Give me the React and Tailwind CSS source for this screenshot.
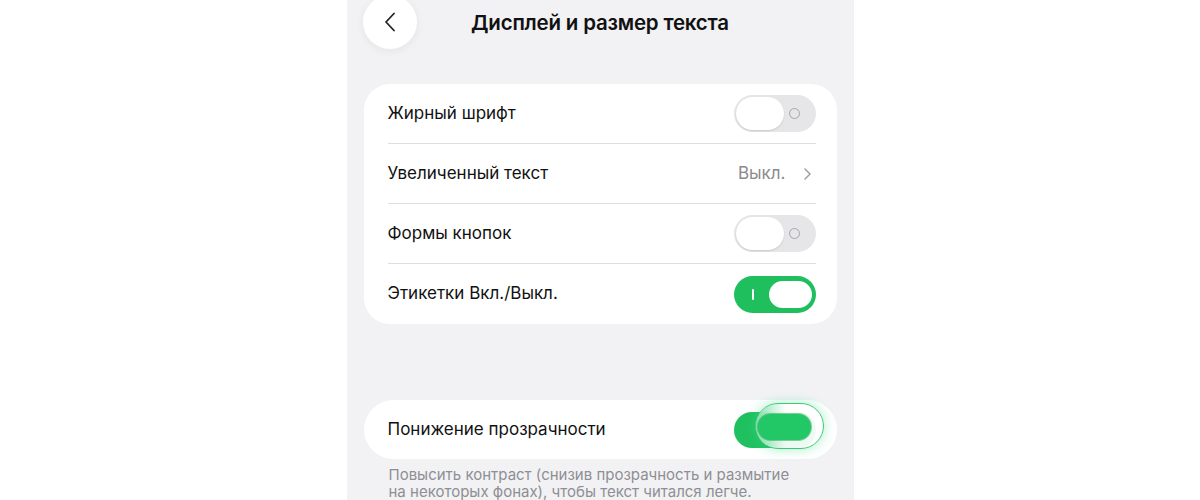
import React from "react";

const font = { fontFamily: "Inter, 'Noto Sans', sans-serif" };

function OffToggle() {
  return (
    <div className="relative w-[82px] h-[37px] rounded-full bg-[#e6e6e9] flex items-center">
      <div className="ml-[2px] w-[48px] h-[33px] rounded-full bg-white shadow-[0_1px_2px_rgba(0,0,0,0.12)]" />
      <div className="ml-[5px] w-[11px] h-[11px] rounded-full border-[1.5px] border-[#a5a5aa]" />
    </div>
  );
}

function OnToggle() {
  return (
    <div className="w-[82px] h-[37px] rounded-full bg-[#1fbf5e] flex items-center">
      <div className="ml-[18px] w-[2px] h-[11px] bg-white rounded-full" />
      <div className="ml-[13px] w-[47px] h-[31px] rounded-full bg-white border-[2px] border-[#1fbf5e]" />
    </div>
  );
}

function GlassToggle() {
  return (
    <div className="relative w-[82px] h-[36px]">
      <div className="absolute left-0 top-0 w-[82px] h-[36px] rounded-full bg-[#1fc060]" />
      <div className="absolute left-[21px] top-[-9px] w-[69px] h-[46px] rounded-full bg-[rgba(255,255,255,0.92)] border border-[#3cc878] shadow-[0_0_12px_rgba(60,220,130,0.45)] overflow-hidden">
        <div className="absolute left-0 top-0 w-[30px] h-full bg-gradient-to-r from-[rgba(40,200,110,0.55)] to-transparent" />
        <div className="absolute left-[2px] top-[10px] w-[53px] h-[26px] rounded-full bg-[#22c766] shadow-[0_0_0_1px_rgba(20,160,80,0.5)]" />
      </div>
    </div>
  );
}

function Row({ label, right, last }) {
  return (
    <div className="h-[60px] flex items-center pr-[21px]">
      <div className={"flex-1 h-full flex items-center justify-between " + (last ? "" : "border-b border-[#dedee2]")}>
        <span className="text-[17px] text-[#111]">{label}</span>
        {right}
      </div>
    </div>
  );
}

export default function App() {
  return (
    <div className="w-[1200px] h-[500px] bg-white flex justify-center overflow-hidden" style={font}>
      <div className="w-[507px] h-full bg-[#f2f2f5] flex flex-col px-[17px]">
        <div className="h-[86px] flex relative">
          <div className="absolute left-[-1px] top-[-5px] w-[54px] h-[54px] rounded-full bg-white shadow-[0_2px_10px_rgba(0,0,0,0.06)] flex items-center justify-center">
            <svg width="12" height="20" viewBox="0 0 12 20" fill="none">
              <path d="M10 1.5 L2 10 L10 18.5" stroke="#222" strokeWidth="1.8" strokeLinecap="round" strokeLinejoin="round" />
            </svg>
          </div>
          <div className="w-full text-center pt-[8px] text-[20.5px] font-semibold text-[#111] tracking-[-0.2px]">
            Дисплей и размер текста
          </div>
        </div>
        <div className="bg-white rounded-[26px] pl-[24px]">
          <Row label="Жирный шрифт" right={<OffToggle />} />
          <Row
            label="Увеличенный текст"
            right={
              <div className="flex items-center gap-[18px] pr-[5px]">
                <span className="text-[17px] text-[#8a8a8e]">Выкл.</span>
                <svg width="7" height="12" viewBox="0 0 7 12" fill="none">
                  <path d="M1 1 L6 6 L1 11" stroke="#a0a0a5" strokeWidth="1.5" strokeLinecap="round" strokeLinejoin="round" />
                </svg>
              </div>
            }
          />
          <Row label="Формы кнопок" right={<OffToggle />} />
          <Row label="Этикетки Вкл./Выкл." right={<OnToggle />} last />
        </div>
        <div className="h-[78px]" />
        <div className="bg-white rounded-[30px] pl-[24px] pr-[21px] h-[60px] flex items-center justify-between">
          <span className="text-[17px] text-[#111]">Понижение прозрачности</span>
          <GlassToggle />
        </div>
        <div className="pl-[25px] pt-[7px] pr-[40px] text-[15px] leading-[17px] text-[#8e8e93]">
          Повысить контраст (снизив прозрачность и размытие на некоторых фонах), чтобы текст читался легче.
        </div>
      </div>
    </div>
  );
}
